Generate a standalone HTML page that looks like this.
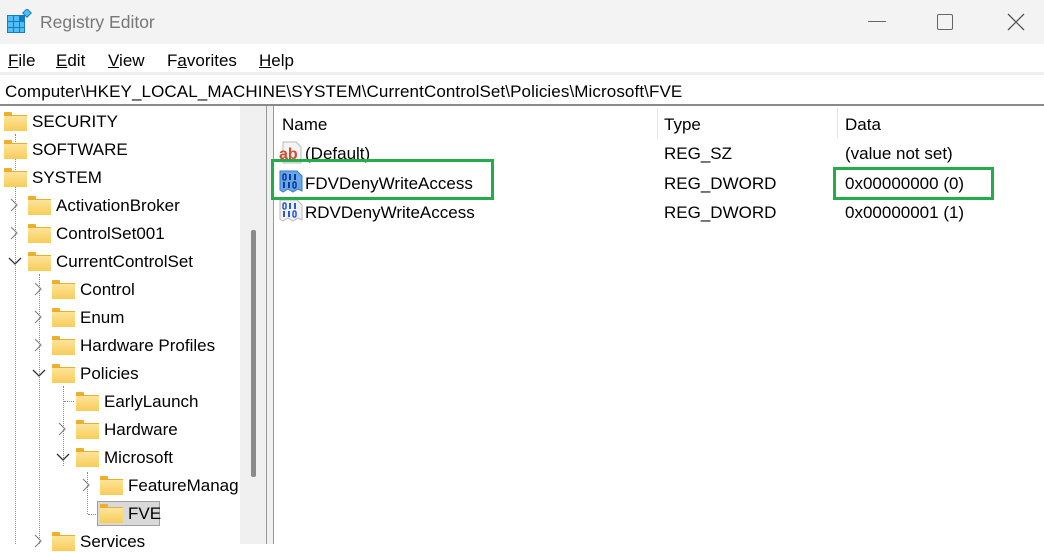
<!DOCTYPE html>
<html><head><meta charset="utf-8"><style>
*{margin:0;padding:0;box-sizing:border-box}
body{width:1044px;height:544px;overflow:hidden;background:#fff;font-family:"Liberation Sans",sans-serif;font-size:17px;color:#000;position:relative}
.a{position:absolute;white-space:nowrap}
.t{line-height:20px}
.f{position:absolute;width:23px;height:18px}
.f:before{content:"";position:absolute;left:0;top:0;width:8px;height:4px;background:#eeb02c;border-radius:1px 1px 0 0}
.f:after{content:"";position:absolute;left:0;top:3px;width:23px;height:15px;background:linear-gradient(#fde49a,#f8cd58);border-top:1px solid #e8ae30}
.dot{position:absolute;border-left:1px dotted #888}
.doth{position:absolute;border-top:1px dotted #888}
</style></head><body>
<div class="a" style="left:0;top:0;width:1044px;height:44px;background:#f3f3f3"></div>
<svg class="a" style="left:7px;top:9px" width="26" height="26" viewBox="0 0 26 26">
<rect x="0" y="6" width="18" height="18" fill="#1a78c8"/>
<g fill="#4fc0f3"><rect x="1" y="7" width="5" height="5"/><rect x="7" y="7" width="5" height="5"/><rect x="1" y="13" width="5" height="5"/><rect x="7" y="13" width="5" height="5"/><rect x="13" y="13" width="4" height="5"/><rect x="1" y="19" width="5" height="4"/><rect x="7" y="19" width="5" height="4"/><rect x="13" y="19" width="4" height="4"/></g>
<rect x="17" y="1" width="6" height="6" transform="rotate(45 20 4)" fill="#4fc0f3" stroke="#1a78c8"/>
</svg>
<div class="a t" style="left:40px;top:12px;font-size:17.5px;color:#777">Registry Editor</div>
<div class="a" style="left:868px;top:21px;width:18px;height:1px;background:#666"></div>
<div class="a" style="left:937px;top:14px;width:16px;height:16px;border:1.5px solid #666;border-radius:2px"></div>
<svg class="a" style="left:1007px;top:13px" width="18" height="18"><path d="M1 1L17 17M17 1L1 17" stroke="#555" stroke-width="1.3"/></svg>
<div class="a t" style="left:8px;top:51px"><u>F</u>ile</div>
<div class="a t" style="left:56px;top:51px"><u>E</u>dit</div>
<div class="a t" style="left:108px;top:51px"><u>V</u>iew</div>
<div class="a t" style="left:167px;top:51px">F<u>a</u>vorites</div>
<div class="a t" style="left:259px;top:51px"><u>H</u>elp</div>
<div class="a" style="left:0;top:72px;width:1044px;height:3px;background:#eeeeee"></div>
<div class="a t" style="left:5px;top:82px;letter-spacing:0.1px">Computer\HKEY_LOCAL_MACHINE\SYSTEM\CurrentControlSet\Policies\Microsoft\FVE</div>
<div class="a" style="left:0;top:104px;width:1044px;height:2px;background:#8a8a8a"></div>
<div class="a" style="left:240px;top:106px;width:26px;height:438px;background:#f0f0f0"></div>
<div class="a" style="left:251px;top:230px;width:5px;height:247px;background:#8a8a8a;border-radius:2px"></div>
<div class="a" style="left:266px;top:106px;width:1px;height:438px;background:#999"></div>
<div class="a" style="left:267px;top:106px;width:6px;height:438px;background:#f0f0f0"></div>
<div class="a" style="left:273px;top:106px;width:1px;height:438px;background:#999"></div>
<div class="a" style="left:0;top:106px;width:240px;height:438px;overflow:hidden">
<div class="dot" style="left:15px;top:28px;height:410px"></div>
<div class="dot" style="left:39px;top:168px;height:270px"></div>
<div class="dot" style="left:63px;top:280px;height:80px"></div>
<div class="doth" style="left:64px;top:295px;width:10px"></div>
<div class="dot" style="left:87px;top:366px;height:42px"></div>
<div class="doth" style="left:88px;top:408px;width:10px"></div>
</div>
<div class="a" style="left:97px;top:501px;width:63px;height:25px;background:#d9d9d9;border:1px solid #a0a0a0"></div>
<div id="tree"></div>
<script>
var rows=[["SECURITY",0,""],["SOFTWARE",0,""],["SYSTEM",0,""],["ActivationBroker",1,">"],["ControlSet001",1,">"],["CurrentControlSet",1,"v"],["Control",2,">"],["Enum",2,">"],["Hardware Profiles",2,">"],["Policies",2,"v"],["EarlyLaunch",3,""],["Hardware",3,">"],["Microsoft",3,"v"],["FeatureManag",4,">"],["FVE",4,""],["Services",2,">"]];
var h="";
rows.forEach(function(r,i){var cy=121+i*28;var fx=4+r[1]*24;
h+='<div class="f" style="left:'+fx+'px;top:'+(cy-9)+'px"></div>';
h+='<div class="a t" style="left:'+(fx+28)+'px;top:'+(cy-9)+'px;max-width:'+(240-fx-28)+'px;overflow:hidden">'+r[0]+'</div>';
if(r[2]==">")h+='<svg class="a" style="left:'+(fx-18)+'px;top:'+(cy-7)+'px" width="8" height="14"><path d="M1 1L7 7L1 13" fill="none" stroke="#888" stroke-width="1.2"/></svg>';
if(r[2]=="v")h+='<svg class="a" style="left:'+(fx-20)+'px;top:'+(cy-4)+'px" width="14" height="8"><path d="M1 1L7 7L13 1" fill="none" stroke="#333" stroke-width="1.3"/></svg>';
});
document.getElementById("tree").innerHTML=h;
</script>
<div class="a t" style="left:282px;top:115px">Name</div>
<div class="a" style="left:657px;top:108px;width:1px;height:30px;background:#e5e5e5"></div>
<div class="a t" style="left:664px;top:115px">Type</div>
<div class="a" style="left:837px;top:108px;width:1px;height:30px;background:#e5e5e5"></div>
<div class="a t" style="left:845px;top:115px">Data</div>
<svg class="a" style="left:279px;top:141px" width="24" height="24"><path d="M4 1H17L22 6V22H4Z" fill="#f4f4f4" stroke="#bbb"/><text x="0" y="18" font-family="Liberation Sans" font-weight="bold" font-size="16" fill="#d84a2e">ab</text></svg>
<div class="a t" style="left:305px;top:144px">(Default)</div>
<div class="a t" style="left:664px;top:144px">REG_SZ</div>
<div class="a t" style="left:845px;top:144px">(value not set)</div>
<svg class="a" style="left:279px;top:170px" width="24" height="24"><path d="M1 1H18L23 6V21L19 19L14 22L9 19L4 22L1 20Z" fill="#6aa6ea" stroke="#3a7ad0"/><g fill="#0a3a9a"><rect x="4" y="4" width="3" height="6" rx="1.5" fill="none" stroke="#0a3a9a" stroke-width="1.5"/><rect x="10" y="4" width="2" height="6"/><rect x="15" y="4" width="2" height="6"/><rect x="4" y="12" width="2" height="6"/><rect x="9" y="12" width="2" height="6"/><rect x="14" y="12" width="3" height="6" rx="1.5" fill="none" stroke="#0a3a9a" stroke-width="1.5"/></g></svg>
<div class="a t" style="left:305px;top:174px">FDVDenyWriteAccess</div>
<div class="a t" style="left:664px;top:174px">REG_DWORD</div>
<div class="a t" style="left:845px;top:174px">0x00000000 (0)</div>
<svg class="a" style="left:279px;top:199px" width="24" height="24"><path d="M1 1H18L23 6V21L19 19L14 22L9 19L4 22L1 20Z" fill="#f2f2f2" stroke="#bbb"/><g fill="#2a5ad0"><rect x="4" y="4" width="3" height="6" rx="1.5" fill="none" stroke="#2a5ad0" stroke-width="1.5"/><rect x="10" y="4" width="2" height="6"/><rect x="15" y="4" width="2" height="6"/><rect x="4" y="12" width="2" height="6"/><rect x="9" y="12" width="2" height="6"/><rect x="14" y="12" width="3" height="6" rx="1.5" fill="none" stroke="#2a5ad0" stroke-width="1.5"/></g></svg>
<div class="a t" style="left:305px;top:203px">RDVDenyWriteAccess</div>
<div class="a t" style="left:664px;top:203px">REG_DWORD</div>
<div class="a t" style="left:845px;top:203px">0x00000001 (1)</div>
<div class="a" style="left:271px;top:159px;width:223px;height:41px;border:3.5px solid #22ac4a"></div>
<div class="a" style="left:833px;top:167px;width:161px;height:33px;border:3.5px solid #22ac4a"></div>
</body></html>
